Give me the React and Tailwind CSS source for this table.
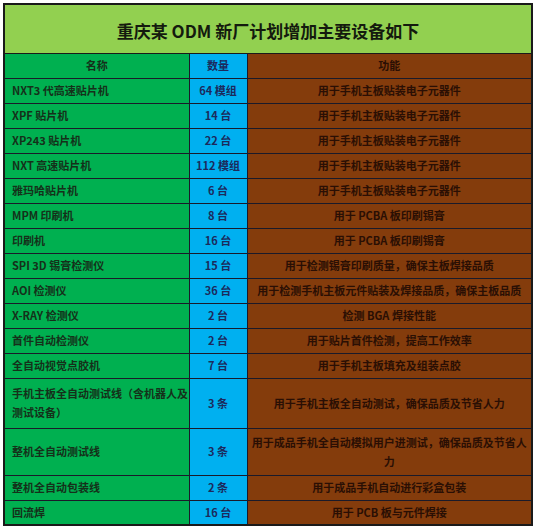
const rows = [
    { name: "NXT3 代高速贴片机", qty: "64 模组", desc: "用于手机主板贴装电子元器件" },
    { name: "XPF 贴片机", qty: "14 台", desc: "用于手机主板贴装电子元器件" },
    { name: "XP243 贴片机", qty: "22 台", desc: "用于手机主板贴装电子元器件" },
    { name: "NXT 高速贴片机", qty: "112 模组", desc: "用于手机主板贴装电子元器件" },
    { name: "雅玛哈贴片机", qty: "6 台", desc: "用于手机主板贴装电子元器件" },
    { name: "MPM 印刷机", qty: "8 台", desc: "用于 PCBA 板印刷锡膏" },
    { name: "印刷机", qty: "16 台", desc: "用于 PCBA 板印刷锡膏" },
    { name: "SPI 3D 锡膏检测仪", qty: "15 台", desc: "用于检测锡膏印刷质量，确保主板焊接品质" },
    { name: "AOI 检测仪", qty: "36 台", desc: "用于检测手机主板元件贴装及焊接品质，确保主板品质" },
    { name: "X-RAY 检测仪", qty: "2 台", desc: "检测 BGA 焊接性能" },
    { name: "首件自动检测仪", qty: "2 台", desc: "用于贴片首件检测，提高工作效率" },
    { name: "全自动视觉点胶机", qty: "7 台", desc: "用于手机主板填充及组装点胶" },
    { name: "手机主板全自动测试线（含机器人及测试设备）", qty: "3 条", desc: "用于手机主板全自动测试，确保品质及节省人力", h: "h-[50px]" },
    { name: "整机全自动测试线", qty: "3 条", desc: "用于成品手机全自动模拟用户进测试，确保品质及节省人力", h: "h-[47px]" },
    { name: "整机全自动包装线", qty: "2 条", desc: "用于成品手机自动进行彩盒包装" },
    { name: "回流焊", qty: "16 台", desc: "用于 PCB 板与元件焊接" },
];

function App() {
    return (
        <div
            className="w-[536px] h-[532px] bg-white pt-[3px] pl-[3px]"
            style={{ fontFamily: '"Noto Sans CJK SC", "Liberation Sans", sans-serif' }}
        >
            <table className="w-[528px] border-collapse border-2 border-[#1a1a1a] table-fixed">
                <colgroup>
                    <col className="w-[185px]" />
                    <col className="w-[58px]" />
                    <col className="w-[285px]" />
                </colgroup>
                <tbody>
                    {/* TITLE */}
                    <tr className="h-[49px] bg-[#92d050]">
                        <td
                            colSpan={3}
                            className="border border-[#1a1a1a] text-center text-[17px] font-bold text-[#141a0e] pt-[3px]"
                        >
                            重庆某 ODM 新厂计划增加主要设备如下
                        </td>
                    </tr>

                    {/* HEADER */}
                    <tr className="h-[25px] text-[11px] font-bold">
                        <td className="border border-[#1a1a2a] bg-[#00b050] text-center text-[#15301a]">
                            名称
                        </td>
                        <td className="border border-[#1a1a2a] bg-[#00b0f0] text-center text-[#1c2a5c]">
                            数量
                        </td>
                        <td className="border border-[#1a1a2a] bg-[#843c0c] text-center text-[#2a0f04]">
                            功能
                        </td>
                    </tr>

                    {/* ROWS */}
                    {rows.map((row, index) => (
                        <tr
                            key={index}
                            className={`${row.h || "h-[25px]"} text-[11px] font-bold leading-[19px]`}
                        >
                            <td className="border border-[#1a1a2a] bg-[#00b050] text-[#15301a] pl-[7px] pr-0">
                                {row.name}
                            </td>
                            <td className="border border-[#1a1a2a] bg-[#00b0f0] text-center text-[#1c2a5c]">
                                {row.qty}
                            </td>
                            <td className="border border-[#1a1a2a] bg-[#843c0c] text-center text-[#2a0f04] px-[4px]">
                                {row.desc}
                            </td>
                        </tr>
                    ))}
                </tbody>
            </table>
        </div>
    );
}

export default App;
